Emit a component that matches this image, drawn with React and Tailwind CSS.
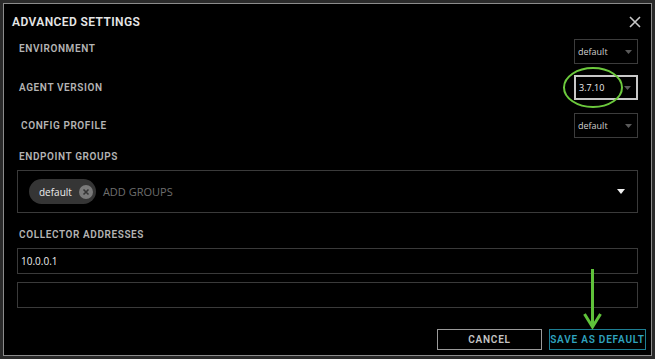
import React from "react";

const labelCls =
  "text-[10px] font-semibold tracking-[0.6px] text-[#b4b4b4] leading-none";

function Select({ value, active }) {
  return (
    <div
      className={
        "w-[64px] h-[25px] flex items-center justify-between pl-[3px] pr-[5px] " +
        (active ? "border-2 border-[#c8c8c8]" : "border border-[#3c3c3c]")
      }
    >
      <span
        className={
          "text-[9px] leading-none " + (active ? "text-[#f0f0f0]" : "text-[#d0d0d0]")
        }
        style={{ fontFamily: '"Open Sans", sans-serif' }}
      >
        {value}
      </span>
      <svg width="7" height="4" viewBox="0 0 7 4">
        <path d="M0 0 L7 0 L3.5 4 Z" fill="#5a5a5a" />
      </svg>
    </div>
  );
}

export default function App() {
  return (
    <div
      className="w-[655px] h-[359px] bg-[#2a2a2a] p-[3px]"
      style={{ fontFamily: 'Roboto, "Liberation Sans", sans-serif' }}
    >
      <div className="relative w-[649px] h-[353px] border border-[#8c8c8c] bg-black flex flex-col">
        {/* header */}
        <div className="flex items-start justify-between pl-[8px] pr-[10px] pt-[10px]">
          <span className="text-[12px] font-semibold tracking-[0.4px] text-[#e6e6e6] leading-[16px]">
            ADVANCED SETTINGS
          </span>
          <svg width="12" height="12" viewBox="0 0 12 12" className="mt-[2px]">
            <path d="M1 1 L11 11 M11 1 L1 11" stroke="#c8c8c8" strokeWidth="1.6" />
          </svg>
        </div>

        {/* select rows */}
        <div className="flex flex-col pl-[15px] pr-[13px] mt-[9px]">
          <div className="flex items-center justify-between h-[25px]">
            <span className={labelCls + " mt-[-5px]"}>ENVIRONMENT</span>
            <Select value="default" />
          </div>
          <div className="flex items-center justify-between h-[25px] mt-[11px]">
            <span className={labelCls}>AGENT VERSION</span>
            <Select value="3.7.10" active />
          </div>
          <div className="flex items-center justify-between h-[25px] mt-[13px]">
            <span className={labelCls + " pl-[2px]"}>CONFIG PROFILE</span>
            <Select value="default" />
          </div>
        </div>

        {/* endpoint groups */}
        <div className="flex flex-col pl-[13px] pr-[13px] mt-[14px]">
          <span className={labelCls + " pl-[2px]"}>ENDPOINT GROUPS</span>
          <div className="mt-[8px] h-[43px] border border-[#3a3a3a] flex items-center pl-[11px] pr-[12px]">
            <div className="h-[25px] rounded-full bg-[#353535] flex items-center pl-[10px] pr-[3px] gap-[7px]">
              <span
                className="text-[10px] text-[#ececec] leading-none"
                style={{ fontFamily: '"Open Sans", sans-serif' }}
              >
                default
              </span>
              <svg width="14" height="14" viewBox="0 0 14 14">
                <circle cx="7" cy="7" r="7" fill="#7a7a7a" />
                <path d="M4.5 4.5 L9.5 9.5 M9.5 4.5 L4.5 9.5" stroke="#353535" strokeWidth="1.6" />
              </svg>
            </div>
            <span
              className="ml-[7px] text-[11px] text-[#6e6e6e] leading-none"
              style={{ fontFamily: '"Open Sans", sans-serif' }}
            >
              ADD GROUPS
            </span>
            <div className="flex-1" />
            <svg width="8" height="5" viewBox="0 0 8 5">
              <path d="M0 0 L8 0 L4 5 Z" fill="#f0f0f0" />
            </svg>
          </div>

          <span className={labelCls + " pl-[2px] mt-[17px]"}>COLLECTOR ADDRESSES</span>
          <div className="mt-[8px] h-[26px] border border-[#3a3a3a] flex items-center pl-[3px]">
            <span
              className="text-[10px] text-[#ececec] leading-none"
              style={{ fontFamily: '"Open Sans", sans-serif' }}
            >
              10.0.0.1
            </span>
          </div>
          <div className="mt-[8px] h-[26px] border border-[#3a3a3a]" />
        </div>

        {/* buttons */}
        <div className="flex justify-end gap-[7px] pr-[5px] mt-[21px]">
          <button className="w-[105px] h-[21px] border border-[#9a9a9a] text-[10px] font-semibold tracking-[0.8px] text-[#c4c4c4] leading-none">
            CANCEL
          </button>
          <button className="w-[97px] h-[21px] border border-[#1e7f94] text-[10px] font-semibold tracking-[0.8px] text-[#2fa3bf] leading-none">
            SAVE AS DEFAULT
          </button>
        </div>

        {/* annotations */}
        <svg
          className="absolute left-0 top-0 pointer-events-none"
          width="649"
          height="353"
          viewBox="0 0 649 353"
        >
          <ellipse cx="589" cy="83.5" rx="29" ry="19.5" fill="none" stroke="#6cc93d" strokeWidth="2" />
          <path d="M588.5 265 L588.5 322" stroke="#5fc23a" strokeWidth="3" />
          <path d="M580.5 310 L588.5 323 L596.5 310" fill="none" stroke="#5fc23a" strokeWidth="3" strokeLinejoin="miter" />
        </svg>
      </div>
    </div>
  );
}
